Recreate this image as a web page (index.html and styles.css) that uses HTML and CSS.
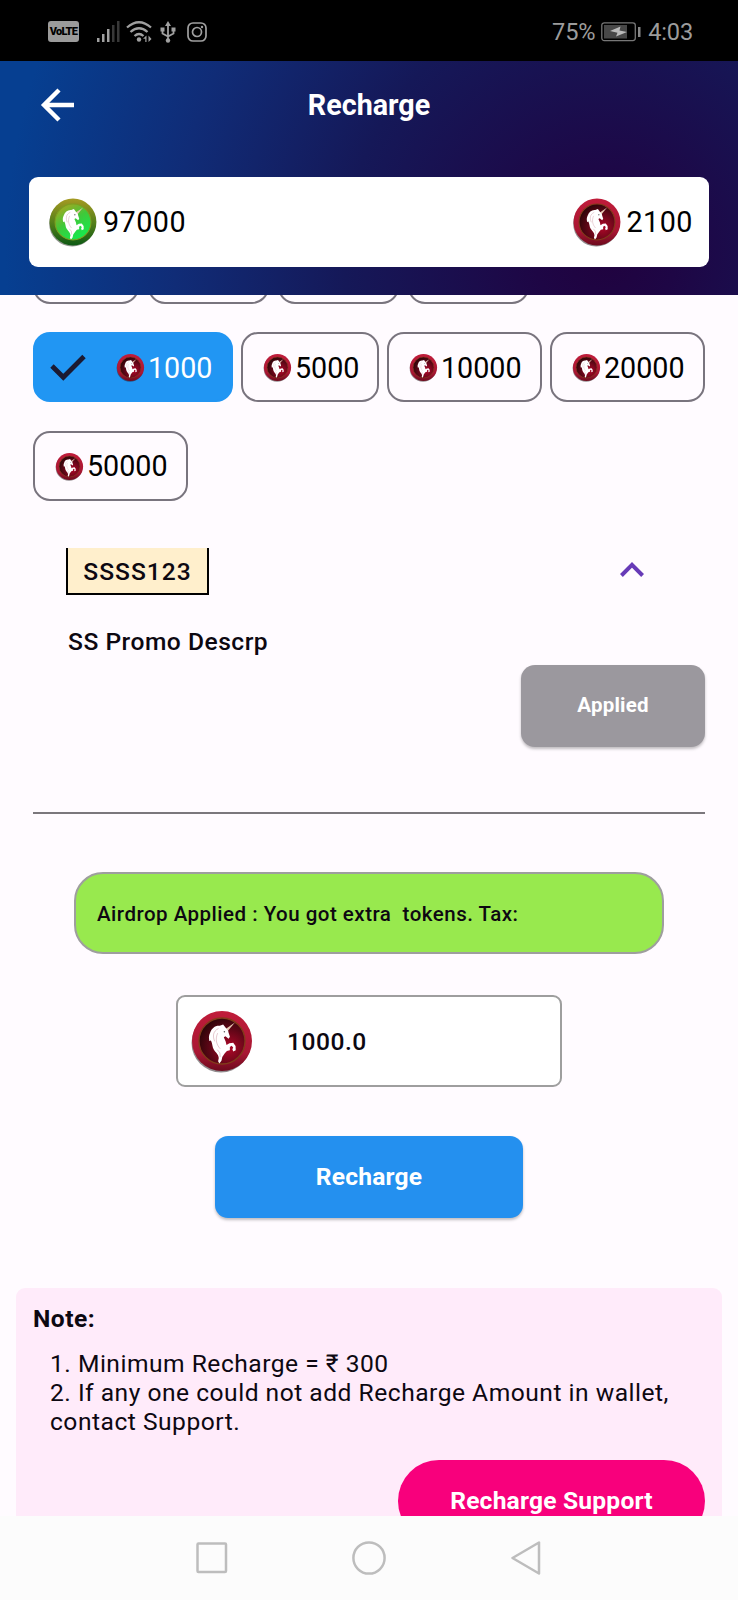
FILE: index.html
```html
<!DOCTYPE html>
<html lang="en">
<head>
<meta charset="utf-8">
<title>Recharge</title>
<link rel="stylesheet" href="styles.css">
</head>
<body>
<svg class="defs" width="0" height="0">
  <defs>
    <linearGradient id="redRim" x1="0" y1="0" x2="0" y2="1"><stop offset="0" stop-color="#c01c3a"/><stop offset=".7" stop-color="#a81733"/><stop offset="1" stop-color="#6d0a1d"/></linearGradient>
    <radialGradient id="redFace" cx=".65" cy=".65" r=".7"><stop offset="0" stop-color="#b00828"/><stop offset=".6" stop-color="#5d0616"/><stop offset="1" stop-color="#2c0508"/></radialGradient>
    <linearGradient id="greenRim" x1="0" y1="0" x2="0" y2="1"><stop offset="0" stop-color="#a59a22"/><stop offset=".5" stop-color="#57801a"/><stop offset="1" stop-color="#0d5a14"/></linearGradient>
    <linearGradient id="greenFace" x1=".1" y1="0" x2=".7" y2="1"><stop offset="0" stop-color="#b5a21e"/><stop offset=".5" stop-color="#3fc83a"/><stop offset="1" stop-color="#12ec50"/></linearGradient>
    <g id="unicorn" transform="matrix(.84 0 0 .92 5 4.800)">
      <path fill="#e8c9b4" d="M36.500 16.500 47.500 9.500 39 18.800Z"/>
      <path fill="#fff" d="M33.500 11.500 36.800 15.500 39.500 18.500 40 20.500 41.600 25 40 27 36.200 24.300 34.300 25.500 36.500 30 37.500 34 41 32 45.500 31.500 48.300 35 48.500 39.500 45.500 41 44.500 38.500 45.500 36.500 43.500 34.800 41.500 36 41.500 39.500 38 40.500 35.500 43 32.500 47 31.500 51 29 54 27.500 51.500 28.300 48C28 44 24.500 42 22.500 39 20.500 36.500 21 32.500 19 29L17 29.500C17.200 27.500 15.500 25.500 18 20.500 20 15.500 24 12.500 29.500 13Z"/>
      <path fill="none" stroke="#8f1832" stroke-width=".6" opacity=".45" d="M28 16C21 19 21 25 23.500 30M27 21C23.500 28 26 34 30 38M26.500 39Q31 42 30 47"/>
      <circle cx="35" cy="19.500" r=".9" fill="#555"/>
    </g>
    <symbol id="coinRed" viewBox="0 0 64 64">
      <circle cx="31" cy="34" r="29.500" fill="#24191d" opacity=".5"/>
      <circle cx="32" cy="32" r="30" fill="url(#redRim)"/>
      <circle cx="32" cy="32" r="23" fill="url(#redFace)" stroke="#803c19" stroke-width="1.300"/>
      <use href="#unicorn"/>
    </symbol>
    <symbol id="coinGreen" viewBox="0 0 64 64">
      <circle cx="31" cy="34" r="29.500" fill="#1d2b18" opacity=".5"/>
      <circle cx="32" cy="32" r="30" fill="url(#greenRim)"/>
      <circle cx="32" cy="32" r="23" fill="url(#greenFace)" stroke="#7d9f20" stroke-width="1.300"/>
      <use href="#unicorn"/>
    </symbol>
  </defs>
</svg>
<div class="screen">
  <div class="status">
    <span class="volte">VoLTE</span>
    <svg class="signal" width="24" height="22" viewBox="0 0 24 22"><g fill="#a0a0a0"><rect x="1" y="17" width="2.500" height="4"/><rect x="6" y="13" width="2.500" height="8"/><rect x="11" y="8" width="2.500" height="13"/></g><g fill="#383838"><rect x="16" y="4" width="2.500" height="17"/><rect x="21" y="0" width="2.500" height="21"/></g></svg>
    <svg class="wifi" width="26" height="22" viewBox="0 0 26 22"><g fill="none" stroke="#a0a0a0" stroke-width="2.300"><path d="M1 6.500Q13-4 25 6.500M4.500 11Q13 3.500 21.500 11M8.500 15Q13 11 17.500 15"/></g><circle cx="13" cy="18.500" r="2.200" fill="#a0a0a0"/><path fill="#a0a0a0" d="M20.500 14.500v6.500h-1.200v-3.200H17zM22.500 21v-6.500l3 3.500z"/></svg>
    <svg class="usb" width="16" height="22" viewBox="0 0 16 22"><path fill="none" stroke="#a0a0a0" stroke-width="1.800" d="M8 3V20M2.500 9v3.500L8 15.500l5.500-3V9"/><path fill="#a0a0a0" d="M8 0l3 5H5zM.5 6.500h4v4h-4zM11.500 6.500h4v4h-4z"/><circle cx="8" cy="19.500" r="2.200" fill="#a0a0a0"/></svg>
    <svg class="insta" width="20" height="20" viewBox="0 0 20 20"><g fill="none" stroke="#a0a0a0" stroke-width="1.700"><rect x="1" y="1" width="18" height="18" rx="5"/><circle cx="10" cy="10" r="4.500"/></g><circle cx="15" cy="5" r="1.200" fill="#a0a0a0"/></svg>
    <span class="status-text percent">75%</span>
    <svg class="battery" width="40" height="20" viewBox="0 0 40 20"><rect x=".8" y=".8" width="33.500" height="17.800" rx="2.500" fill="none" stroke="#777" stroke-width="1.300"/><rect x="3" y="3" width="23" height="13.500" fill="#484848"/><path fill="#bbb" d="M19.500 4.500 18.500 8.500 26 10 15 14.500 16.500 10.800 9 9Z"/><rect x="37" y="5" width="2.500" height="10" fill="#888"/></svg>
    <span class="status-text">4:03</span>
  </div>

  <header class="header">
    <div class="title-row">
      <svg class="back" width="34" height="34" viewBox="0 0 34 34"><path fill="none" stroke="#fff" stroke-width="4.400" d="M34 17H4M19 2 4 17 19 32"/></svg>
      <h1 class="title">Recharge</h1>
    </div>
    <div class="balance">
      <div class="amount"><svg class="coin-md"><use href="#coinGreen"/></svg><span>97000</span></div>
      <div class="amount"><svg class="coin-md"><use href="#coinRed"/></svg><span>2100</span></div>
    </div>
  </header>

  <main class="content">
    <div class="chips-cut"><i class="cut cut-a"></i><i class="cut cut-b"></i><i class="cut cut-b"></i><i class="cut cut-b"></i></div>
    <div class="chips">
      <div class="chip selected"><svg class="check" width="36" height="27" viewBox="0 0 36 27"><path fill="none" stroke="#1b1a32" stroke-width="4.800" d="M2 12 13.300 23.300 34 2.500"/></svg><svg class="coin-sm"><use href="#coinRed"/></svg><span>1000</span></div>
      <div class="chip four"><svg class="coin-sm"><use href="#coinRed"/></svg><span>5000</span></div>
      <div class="chip five"><svg class="coin-sm"><use href="#coinRed"/></svg><span>10000</span></div>
      <div class="chip five"><svg class="coin-sm"><use href="#coinRed"/></svg><span>20000</span></div>
      <div class="chip five last"><svg class="coin-sm"><use href="#coinRed"/></svg><span>50000</span></div>
    </div>

    <section class="promo">
      <div class="promo-head">
        <span class="code">SSSS123</span>
        <svg class="chevron" width="24" height="15" viewBox="0 0 24 15"><path fill="none" stroke="#673ab7" stroke-width="4" d="M1.400 13.500 12 2.900 22.600 13.500"/></svg>
      </div>
      <p class="descr">SS Promo Descrp</p>
      <div class="applied">Applied</div>
    </section>

    <div class="airdrop">Airdrop Applied : You got extra&nbsp; tokens. Tax:</div>
    <div class="field"><svg class="coin-lg"><use href="#coinRed"/></svg><span>1000.0</span></div>
    <div class="recharge">Recharge</div>

    <section class="note">
      <h2 class="note-title">Note:</h2>
      <p class="note-text">1. Minimum Recharge = ₹ 300<br>2. If any one could not add Recharge Amount in wallet,<br>contact Support.</p>
      <div class="support">Recharge Support</div>
    </section>
  </main>

  <nav class="nav">
    <svg width="32" height="32" viewBox="0 0 32 32"><rect x="1.500" y="1.500" width="28.500" height="28.500" rx="1" fill="none" stroke="#bdbdbd" stroke-width="2.500"/></svg>
    <svg width="34" height="34" viewBox="0 0 34 34"><circle cx="17" cy="17" r="15.600" fill="none" stroke="#bdbdbd" stroke-width="2.500"/></svg>
    <svg width="30" height="34" viewBox="0 0 30 34"><path fill="none" stroke="#bdbdbd" stroke-width="2.500" stroke-linejoin="round" d="M28 1.500v31L1.500 17z"/></svg>
  </nav>
</div>
</body>
</html>
```

FILE: styles.css
```css
* { box-sizing: border-box; }
body { margin: 0; font-family: Roboto, "Noto Sans", sans-serif; color: #0d0811; }
.defs { display: block; position: absolute; }
svg { display: block; flex: none; }
h1, h2, p { margin: 0; }
.screen { width: 738px; height: 1600px; display: flex; flex-direction: column; background: #fffbff; overflow: hidden; }

.status { height: 61px; flex: none; background: #000; display: flex; align-items: center; padding: 2px 45px 0 48px; }
.volte { width: 31px; height: 21px; border-radius: 3px; background: #9b9b9b; color: #000; font-size: 11px; line-height: 21px; font-weight: 900; text-align: center; letter-spacing: -.7px; }
.signal { margin-left: 17px; }
.wifi { margin-left: 6px; }
.usb { margin-left: 8px; }
.insta { margin-left: 11px; }
.status-text { color: #9c9c9c; font-size: 23.600px; letter-spacing: -.2px; }
.percent { margin-left: auto; }
.battery { margin: 0 7px 0 6px; }

.header { height: 234px; flex: none; padding: 0 29px; background: radial-gradient(circle at 605px 195px, #20023f 0, #1e0645 70px, #151858 260px, #102c77 430px, #063f91 600px); }
.title-row { height: 116px; display: flex; align-items: flex-start; padding: 27px 0 0 11px; }
.title { width: 656px; margin-left: -33px; text-align: center; color: #fff; font-size: 28.700px; line-height: 34px; font-weight: 700; }
.balance { height: 90px; border-radius: 9px; background: #fff; display: flex; justify-content: space-between; align-items: center; padding: 0 16px 0 19px; }
.amount { display: flex; align-items: center; gap: 5px; color: #000; font-size: 28.700px; letter-spacing: .5px; }
.coin-md { width: 50px; height: 50px; }

.content { height: 1221px; flex: none; overflow: hidden; }
.chips-cut { height: 9px; display: flex; align-items: flex-end; gap: 9px; padding-left: 33px; overflow: hidden; }
.cut { flex: none; height: 70px; border: 2px solid #79747e; border-radius: 17px; }
.cut-a { width: 106px; }
.cut-b { width: 121px; }
.chips { display: flex; flex-wrap: wrap; column-gap: 8px; row-gap: 29px; padding: 28px 33px 0; }
.chip { height: 70px; border: 2px solid #79747e; border-radius: 17px; display: flex; align-items: center; padding-left: 20px; gap: 3px; font-size: 28.700px; color: #000; }
.chip span { padding-top: 1px; }
.chip.last span { padding-top: 0; }
.chip.selected { width: 200px; background: #2196f3; border-color: #2196f3; color: #fff; padding-left: 15px; }
.chip.four { width: 138px; }
.chip.five { width: 155px; }
.check { margin-right: 27px; }
.coin-sm { width: 29px; height: 29px; }

.promo { margin: 47px 33px 0; height: 266px; border-bottom: 2px solid #7b777c; }
.promo-head { display: flex; justify-content: space-between; align-items: flex-start; padding: 0 61px 0 33px; }
.code { width: 143px; height: 47px; border: 2px solid #000; border-top: 0; background: #ffefcc; font-size: 24.600px; line-height: 48px; font-weight: 500; letter-spacing: 1px; text-align: center; }
.chevron { margin-top: 14px; }
.descr { margin: 32px 0 0 35px; font-size: 24.600px; line-height: 30px; font-weight: 500; letter-spacing: .5px; }
.applied { margin: 8px 0 0 auto; width: 184px; height: 82px; border-radius: 14px; background: #9b989e; box-shadow: 0 2px 3px rgba(0,0,0,.25); color: #fff; font-size: 20.500px; line-height: 80px; font-weight: 700; text-align: center; letter-spacing: .2px; }

.airdrop { margin: 58px auto 0; width: 590px; height: 82px; border: 2px solid #9e9e9e; border-radius: 29px; background: #98e94e; padding-left: 21px; font-size: 20.500px; line-height: 80px; font-weight: 500; letter-spacing: .5px; }
.field { margin: 41px auto 0; width: 386px; height: 92px; border: 2px solid #9e9e9e; border-radius: 9px; background: #fff; display: flex; align-items: center; padding-left: 12px; font-size: 24.600px; font-weight: 500; letter-spacing: .5px; }
.coin-lg { width: 64px; height: 64px; margin-right: 33px; }
.recharge { margin: 49px auto 0; width: 308px; height: 82px; border-radius: 13px; background: #2490ef; box-shadow: 0 2px 3px rgba(0,0,0,.25); color: #fff; font-size: 24.600px; line-height: 82px; font-weight: 700; text-align: center; letter-spacing: .2px; }

.note { margin: 70px 16px 0; height: 300px; padding: 16px 17px 0; border-radius: 9px; background: #ffebfa; }
.note-title { font-size: 24.600px; line-height: 29px; font-weight: 700; letter-spacing: .5px; }
.note-text { margin: 17px 0 0 17px; font-size: 24.600px; line-height: 28.800px; letter-spacing: .5px; white-space: nowrap; }
.support { margin: 24px 0 0 auto; width: 307px; height: 82px; border-radius: 41px; background: #f8007c; color: #fff; font-size: 24.600px; line-height: 82px; font-weight: 700; text-align: center; letter-spacing: .2px; }

.nav { height: 84px; flex: none; background: #fcfcfc; display: flex; align-items: center; justify-content: center; gap: 124.500px; padding: 0 2px 0 0; }
```
